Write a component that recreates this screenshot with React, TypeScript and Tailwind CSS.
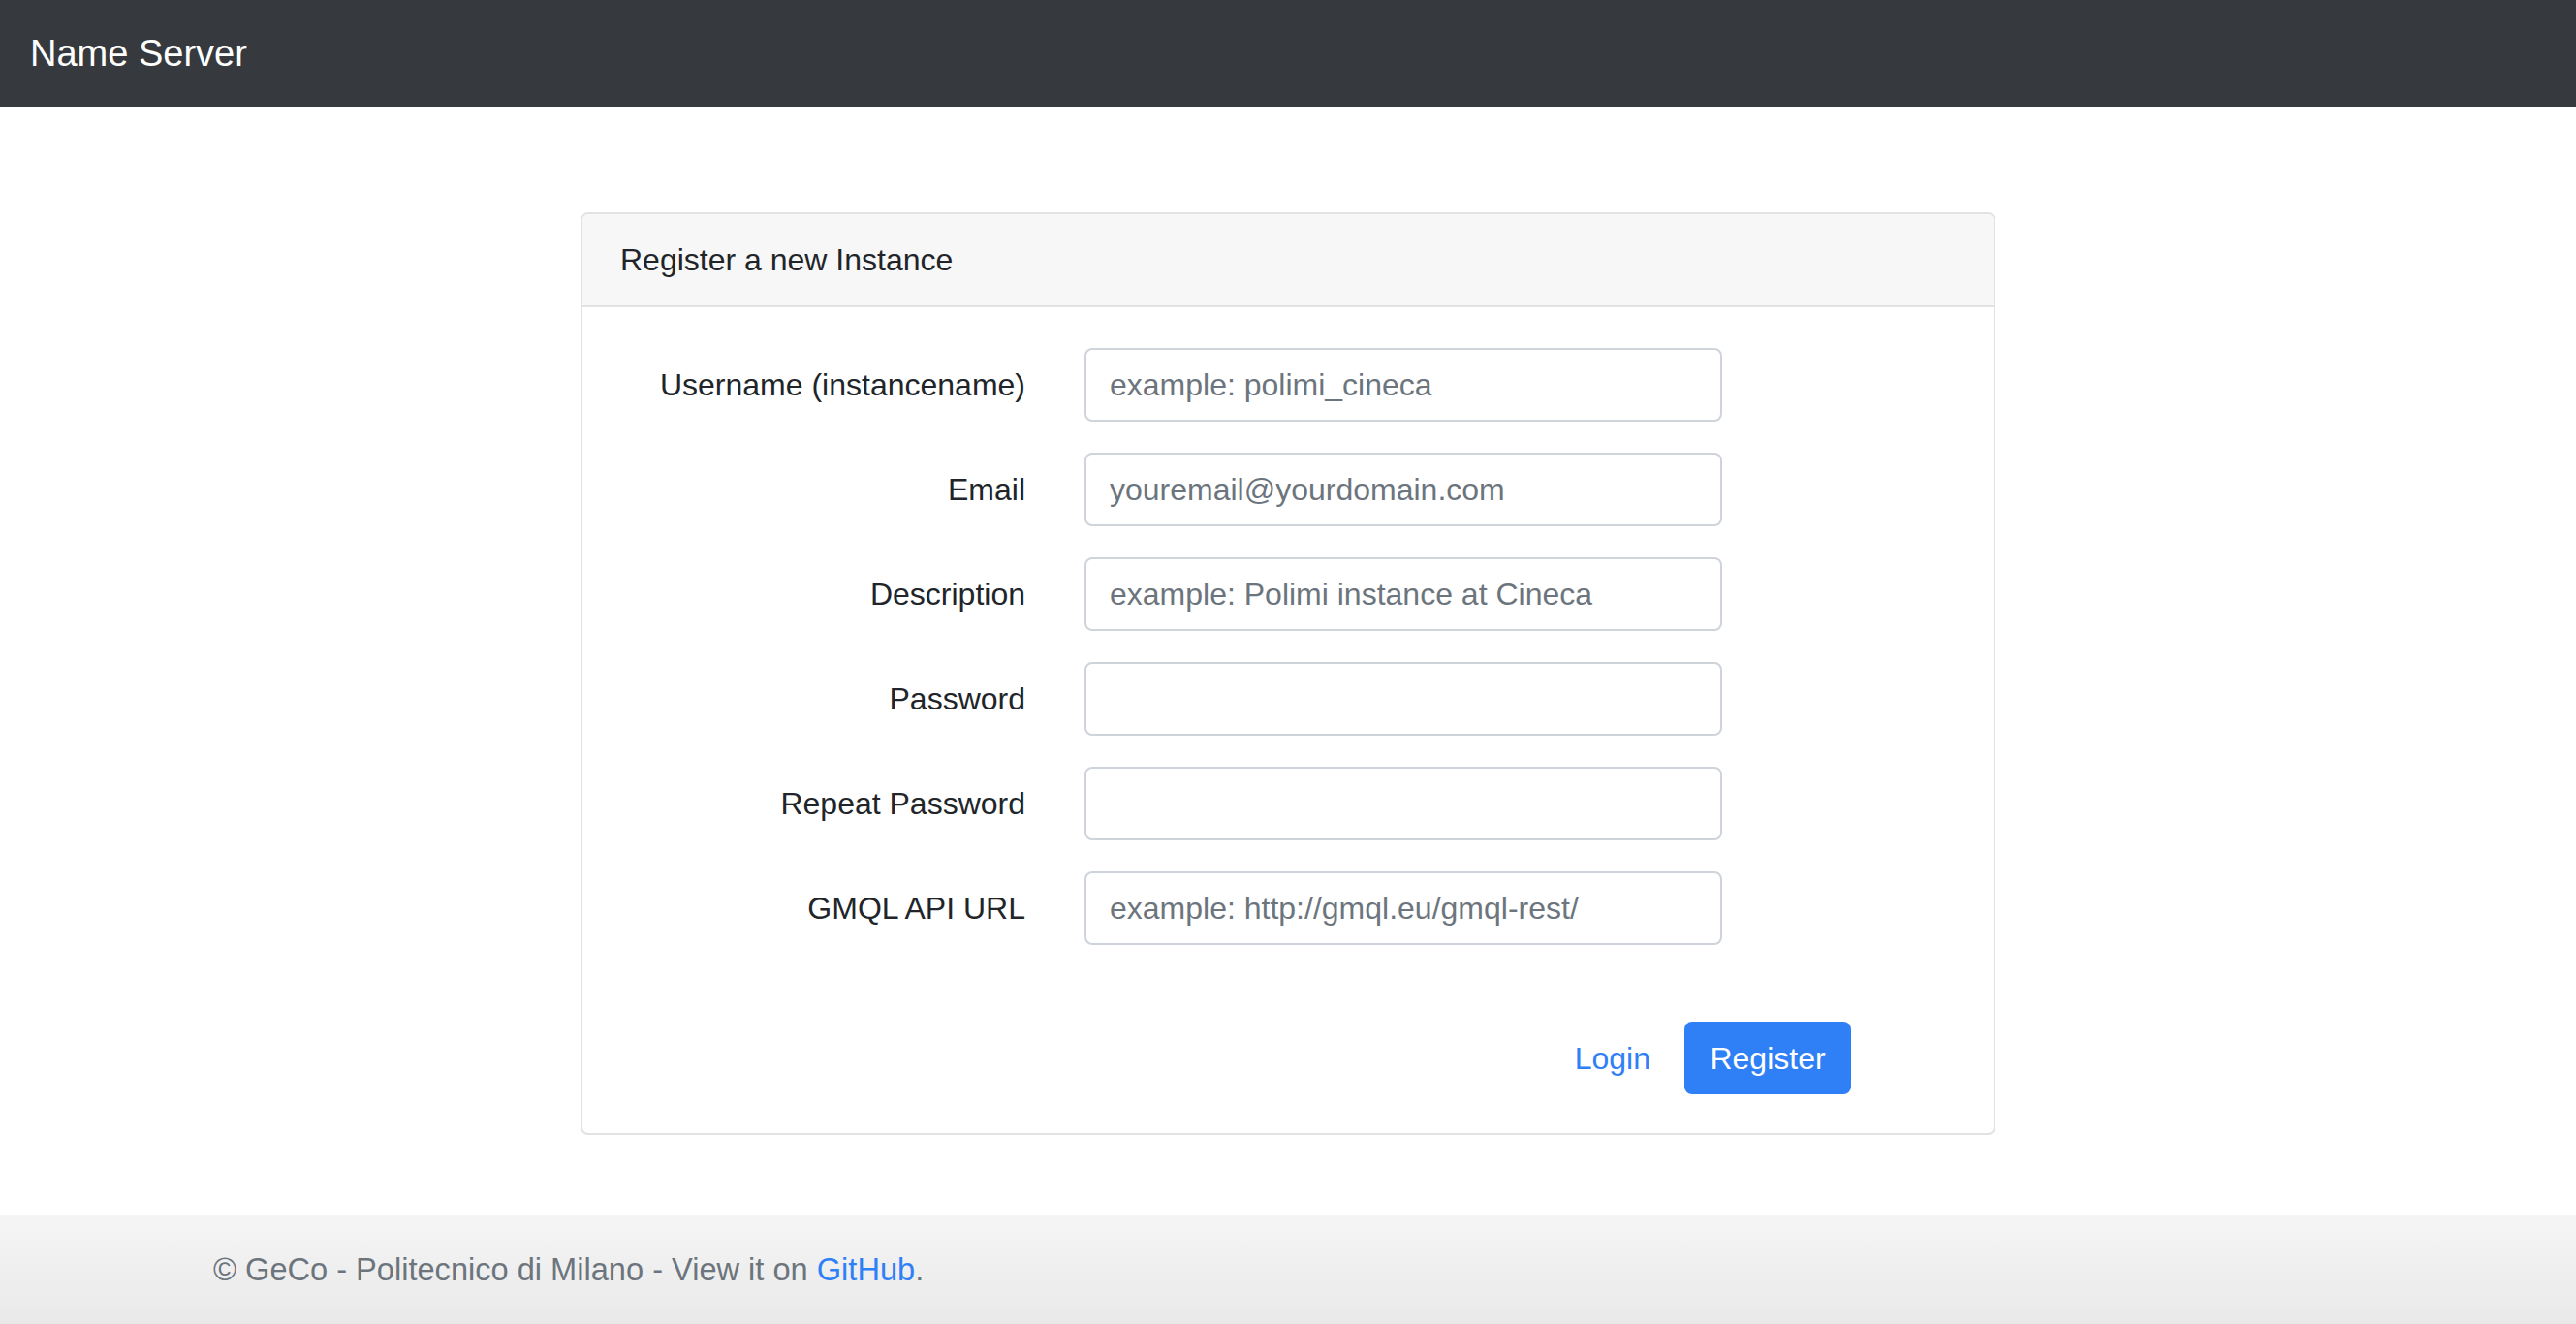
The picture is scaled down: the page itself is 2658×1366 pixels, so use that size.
import React from 'react';

const fields = [
  { label: 'Username (instancename)', placeholder: 'example: polimi_cineca', type: 'text' },
  { label: 'Email', placeholder: 'youremail@yourdomain.com', type: 'email' },
  { label: 'Description', placeholder: 'example: Polimi instance at Cineca', type: 'text' },
  { label: 'Password', placeholder: '', type: 'password' },
  { label: 'Repeat Password', placeholder: '', type: 'password' },
  { label: 'GMQL API URL', placeholder: 'example: http://gmql.eu/gmql-rest/', type: 'text' },
];

const App: React.FC = () => {
  return (
    <div
      className="min-h-screen flex flex-col bg-white text-[#212529]"
      style={{ fontFamily: '"Liberation Sans", Arial, sans-serif' }}
    >
      {/* Navbar */}
      <header className="h-[110px] bg-[#363a3e] flex items-center px-[31px]">
        <span className="text-white text-[38px] leading-none">Name Server</span>
      </header>

      {/* Register card */}
      <main className="flex-1 pt-[109px]">
        <div className="mx-auto w-[1460px] border-2 border-[#e2e2e2] rounded-[8px] overflow-hidden">
          <div className="h-[96px] bg-[#f7f7f7] border-b-2 border-[#e2e2e2] flex items-center px-[39px] text-[32px]">
            Register a new Instance
          </div>
          <div className="pt-[42px] pb-[40px] px-[38px]">
            <div className="flex flex-col gap-[32px]">
              {fields.map((f) => (
                <div key={f.label} className="flex items-center gap-[61px]">
                  <label className="w-[419px] text-right text-[32px] leading-none">{f.label}</label>
                  <input
                    type={f.type}
                    placeholder={f.placeholder}
                    className="w-[658px] h-[76px] border-2 border-[#ced4da] rounded-[8px] px-[24px] text-[32px] text-[#495057] placeholder:text-[#6c757d] outline-none"
                  />
                </div>
              ))}
            </div>
            <div className="flex justify-end items-center gap-[9px] mt-[79px] pr-[109px]">
              <button className="h-[75px] px-[26px] text-[32px] text-[#2f80f6] bg-transparent">Login</button>
              <button className="h-[75px] w-[172px] rounded-[8px] text-[32px] text-white bg-[#2f80f6]">
                Register
              </button>
            </div>
          </div>
        </div>
      </main>

      {/* Footer */}
      <footer className="mt-[83px] h-[112px] bg-gradient-to-b from-[#f5f5f5] to-[#e9e9e9] flex items-center px-[220px]">
        <span className="text-[32.6px] text-[#6c757d]">
          © GeCo - Politecnico di Milano - View it on <a className="text-[#2f80f6]">GitHub</a>.
        </span>
      </footer>
    </div>
  );
};

export default App;
